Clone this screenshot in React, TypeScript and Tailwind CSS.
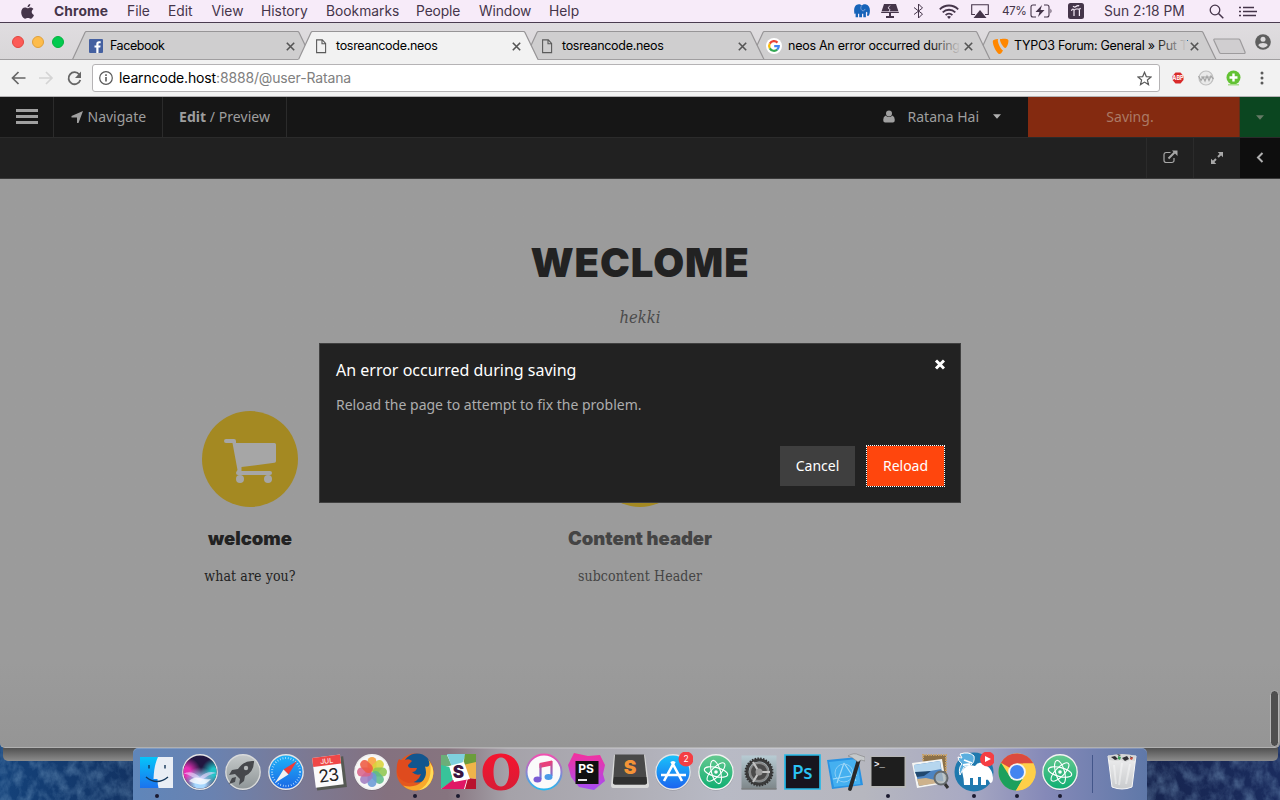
import React from "react";
import type { ReactNode } from "react";

const INK = "#45354a";

function Svg({ w, h, children, className = "", vb }: { w: number; h: number; children: ReactNode; className?: string; vb?: string }) {
  return (
    <svg width={w} height={h} viewBox={vb ?? `0 0 ${w} ${h}`} className={`block shrink-0 ${className}`} fill="none">
      {children}
    </svg>
  );
}

const Elephant = ({ size, color }: { size: number; color: string }) => (
  <Svg w={size} h={size} vb="0 0 16 16">
    <path fill={color} d="M.2 9C-.2 4.500 1.500 1.500 4.800 1.300c1.300 0 2 .5 3 1.200C8.900 1.300 10 1 11.500 1.200c3.200.6 4.500 3.300 4.400 6.300 0 3-.6 5.300-1.900 5.400-.8 0-1.200-.6-.9-1.500.3-1 .3-2.200-.3-2.700-.6.2-.9.5-.9 1.300v4.300H9.300v-3.600H8v3.600H5.200v-3.600H4v3.600H1.600V10C1.300 11.500.4 11.500.2 9z" />
    <path d="M7.300 3c-.8 1.500-.6 3.500.8 4.500 1.400.8 2.600 0 3-1.600" stroke="#f7ebf9" strokeWidth=".4" />
  </Svg>
);

function MenuBar() {
  return (
    <header className="flex h-[23px] shrink-0 items-center border-b border-[#4b3c50] bg-[#f7ebf9] text-[13.8px] leading-none text-[#45354a]">
      <div className="flex w-[54px] pl-[20px]">
        <Svg w={15} h={17}>
          <path fill={INK} d="M10.300 1c.1 1.700-1.200 3.300-2.800 3.300C7.300 2.700 8.700 1.200 10.300 1zM7.500 5.300c.7 0 1.700-.8 3-.8 1.200 0 2.200.5 2.900 1.500-2.500 1.500-2 5 .6 6-.7 1.900-2 3.700-3.300 3.700-1.100 0-1.500-.6-2.800-.6s-1.800.6-2.800.6C3.200 15.700 1.300 12.600 1.200 9.600 1.100 6.500 3 4.600 5 4.600c1.200 0 2 .7 2.500.7z" />
        </Svg>
      </div>
      <b className="w-[73px] pt-[2px] font-bold tracking-[0.1px]">Chrome</b>
      <span className="w-[41px] pt-[2px]">File</span>
      <span className="w-[43.500px] pt-[2px]">Edit</span>
      <span className="w-[49.500px] pt-[2px]">View</span>
      <span className="w-[65px] pt-[2px]">History</span>
      <span className="w-[90px] pt-[2px]">Bookmarks</span>
      <span className="w-[63px] pt-[2px] tracking-[-0.1px]">People</span>
      <span className="w-[70px] pt-[2px] tracking-[-0.1px]">Window</span>
      <span className="pt-[2px]">Help</span>
      <div className="ml-auto flex items-center">
        <div className="w-[27px]"><Elephant size={16} color="#1763b9" /></div>
        <div className="w-[33px]">
          <Svg w={18} h={14}>
            <path fill={INK} d="M3 0h12l3 9H0zM8 9h2v3H8zM5 12h8v2H5z" />
            <path d="M9 1.500 7 4l2 1.500L8 8" stroke="#f7ebf9" strokeWidth=".8" />
            <path d="M0 7.500h18" stroke="#f7ebf9" strokeWidth=".6" />
          </Svg>
        </div>
        <div className="w-[25px]">
          <Svg w={11} h={16} className="-ml-px"><path d="M1 4.500 9.500 11 5.500 15V1l4 4L1 11.500" stroke={INK} strokeWidth="1" /></Svg>
        </div>
        <div className="w-[32px]">
          <Svg w={20} h={15}>
            <g stroke={INK} strokeWidth="1.800"><path d="M.8 5.300a13 13 0 0 1 18.400 0M3.700 8.300a9 9 0 0 1 12.600 0M6.600 11.100a5 5 0 0 1 6.800 0" /></g>
            <path fill={INK} d="m10 15-2-2.200a3 3 0 0 1 4 0z" />
          </Svg>
        </div>
        <div className="w-[31px]">
          <Svg w={18} h={15}>
            <path d="M4 10.500H.7V.7h16.600v9.800H14" stroke={INK} strokeWidth="1.100" />
            <path fill={INK} d="m9 6 6.500 8h-13z" />
          </Svg>
        </div>
        <span className="w-[28px] pt-[1px] text-[11.8px] tracking-[-0.5px]">47%</span>
        <div className="w-[38px]">
          <Svg w={23} h={14}>
            <path d="M6 1H3Q1 1 1 3v8q0 2 2 2h3M14 1h3q2 0 2 2v8q0 2-2 2h-3" stroke={INK} strokeWidth="1.100" />
            <path fill={INK} d="M12 1 5.500 8h4L8 13l6.500-7h-4zM20.500 4.500q2 2.500 0 5z" />
          </Svg>
        </div>
        <div className="w-[36px]">
          <Svg w={16} h={16}>
            <rect width="16" height="16" rx="2.500" fill={INK} />
            <path d="M5 3.200q1.500 1.500 3 .3t3.200-.6M3.500 7.800Q4 5.800 5.300 6.200q1 .4.700 2v4.800M6 7.500q1-1.700 2.600-1.500h1.600q1.200 0 1.200 1.500V13M11 6.200l1.700-.8" stroke="#f7ebf9" strokeWidth="1.200" />
          </Svg>
        </div>
        <span className="w-[105px] pt-[2px]">Sun 2:18 PM</span>
        <div className="w-[30px]">
          <Svg w={15} h={15}><circle cx="6" cy="6" r="4.800" stroke={INK} strokeWidth="1.300" /><path d="m9.500 9.500 4.800 4.800" stroke={INK} strokeWidth="1.500" /></Svg>
        </div>
        <div className="w-[41px]">
          <Svg w={18} h={11}>
            <path d="M0 1.500h2M0 5.500h2M0 9.500h2M4 1.500h11M4 5.500h14M4 9.500h13" stroke={INK} strokeWidth="1.700" />
          </Svg>
        </div>
      </div>
    </header>
  );
}

const PageIcon = () => (
  <Svg w={15} h={15} className="ml-[1px]">
    <path d="M1.600.9h5.700l3.300 3.500v9.200h-9zM7 .9v3.800h3.600" stroke="#5a5a5a" strokeWidth="1.100" />
  </Svg>
);

const FacebookIcon = () => (
  <Svg w={14} h={14} className="ml-[1px]">
    <rect width="14" height="14" rx="1" fill="#4460a0" />
    <path fill="#fff" d="M7.300 14V8.600H5.500V6.500h1.800V5c0-1.800 1-2.800 2.700-2.800l1.700.1v1.900h-1.200c-.9 0-1 .5-1 1.100v1.200h2.100l-.3 2.100H9.500V14z" />
  </Svg>
);

const GoogleIcon = () => (
  <Svg w={16} h={16}>
    <circle cx="8" cy="8" r="8" fill="#fff" />
    <g strokeWidth="2.200">
      <path d="M3.800 5.600A4.900 4.900 0 0 1 11.500 4.600" stroke="#ea4335" />
      <path d="M3.800 5.600a4.900 4.900 0 0 0 0 4.800" stroke="#fbbc05" />
      <path d="M3.800 10.400a4.900 4.900 0 0 0 7.400 1.200" stroke="#34a853" />
      <path d="M11.200 11.600A4.500 4.500 0 0 0 12.800 8.100H8.200" stroke="#4285f4" />
    </g>
  </Svg>
);

const Typo3Icon = () => (
  <Svg w={17} h={17}>
    <path fill="#ff8700" d="M.8 3C1 2 3 1 6 1c-1 3 2.500 10 5 11.500-1 1.800-2.200 3.500-3.500 3.500C5 16 .5 7.500.8 3zM8 1.200c1.500-.4 7-.9 8.300.8.700 2-1.300 8-3 8-1.700 0-5.800-6.500-5.300-8.800z" />
  </Svg>
);

type TabInfo = { title: string; icon: ReactNode; active?: boolean; fade?: boolean; z: string; track: string };

const tabs: TabInfo[] = [
  { title: "Facebook", icon: <FacebookIcon />, z: "z-[5]", track: "tracking-[-0.45px]" },
  { title: "tosreancode.neos", icon: <PageIcon />, active: true, z: "z-[6]", track: "tracking-[-0.3px]" },
  { title: "tosreancode.neos", icon: <PageIcon />, z: "z-[4]", track: "tracking-[-0.3px]" },
  { title: "neos An error occurred during", icon: <GoogleIcon />, fade: true, z: "z-[3]", track: "tracking-[-0.26px]" },
  { title: "TYPO3 Forum: General » Put T", icon: <Typo3Icon />, fade: true, z: "z-[2]", track: "tracking-[-0.28px]" },
];

function Tab({ tab }: { tab: TabInfo }) {
  const fill = tab.active ? "#f2f2f2" : "#cfcecf";
  return (
    <div className={`relative -mr-[14px] flex h-[29px] w-[240px] shrink-0 items-center pl-[16px] pr-[16px] pt-[1px] ${tab.z}`}>
      <svg width="241" height="29" className="absolute left-0 top-0" fill="none">
        <path d="M0 29 14 .5H226L240 29z" fill={fill} />
        <path d="M.5 28.500 13 1.500q.5-1 1.500-1h211q1 0 1.500 1L240 28.500" stroke="#979597" strokeWidth="1.200" />
        {!tab.active && <path d="M0 28.500h240" stroke="#a09ea0" />}
      </svg>
      <div className="relative flex w-full items-center text-[12.500px] leading-none text-black">
        <div className="flex w-[22px] justify-start">{tab.icon}</div>
        <div className={`w-[172px] whitespace-nowrap pb-[2px] pt-[3px] ${tab.track}`}>
          {tab.title}
        </div>
        {tab.fade && (
          <div className="absolute left-[162px] top-0 h-full w-[33px] bg-linear-to-r from-[#cfcecf00] to-[#cfcecf]" />
        )}
        <Svg w={9} h={9} className="ml-[4px]"><path d="m.8.8 7.400 7.400M8.200.8.8 8.200" stroke="#555" strokeWidth="1.600" /></Svg>
      </div>
    </div>
  );
}

function TabStrip() {
  return (
    <div className="relative flex h-[37px] shrink-0 items-end bg-linear-to-b from-[#e0dde0] to-[#d8d6d8]">
      <div className="absolute inset-x-0 bottom-0 h-px bg-[#a09ea0]" />
      <div className="flex h-full w-[72px] items-center gap-[8px] pb-0 pl-[12px]">
        <i className="size-[12px] rounded-full border border-[#e2463f] bg-[#fc5b57]" />
        <i className="size-[12px] rounded-full border border-[#e0a03a] bg-[#fdbc4b]" />
        <i className="size-[12px] rounded-full border border-[#05b33f] bg-[#02ca4f]" />
      </div>
      {tabs.map((t, i) => <Tab key={i} tab={t} />)}
      <div className="flex flex-1 self-stretch pl-[11px] pt-[15px]">
        <Svg w={34} h={17}>
          <path d="M1.500 1h24q1 0 1.500 1l5 12q.5 1.500-1 1.500H8q-1 0-1.500-1L1 2.500Q.5 1 1.500 1z" fill="#d0ced0" stroke="#9d9b9d" strokeWidth="1.200" />
        </Svg>
      </div>
      <div className="flex w-[25px] self-stretch pt-[11px]">
        <Svg w={16} h={16}>
          <circle cx="8" cy="8" r="7.800" fill="#5f5f5f" /><circle cx="8" cy="5.200" r="2.500" fill="#dcdadc" />
          <path d="M3.300 11.200C4 8.300 12 8.300 12.700 11.200 10.500 14.500 5.500 14.500 3.300 11.200z" fill="#dcdadc" />
        </Svg>
      </div>
    </div>
  );
}

function Toolbar() {
  return (
    <div className="flex h-[37px] shrink-0 items-center border-b border-[#b5b3b5] bg-[#f2f2f2] pl-[11px]">
      <Svg w={15} h={14}><path d="M14.500 7H1.500M7.500 1l-6 6 6 6" stroke="#666" strokeWidth="1.700" /></Svg>
      <Svg w={15} h={14} className="ml-[13px]"><path d="M0 7h13M7 1l6 6-6 6" stroke="#d4d4d4" strokeWidth="1.700" /></Svg>
      <Svg w={15} h={15} className="ml-[13px]">
        <path d="M12.300 3.500a6 6 0 1 0 1 5.500" stroke="#666" strokeWidth="1.800" /><path d="M14 .5V7H8z" fill="#666" />
      </Svg>
      <div className="ml-[10px] flex h-[28px] w-[1068px] items-center rounded-[3px] border border-[#b5b3b5] bg-white pl-[6px] pr-[7px]">
        <Svg w={14} h={14}>
          <circle cx="7" cy="7" r="6.300" stroke="#5a5a5a" strokeWidth="1.200" /><path d="M7 6v4.500M7 3.300v1.600" stroke="#5a5a5a" strokeWidth="1.600" />
        </Svg>
        <div className="ml-[6px] flex-1 text-[14px] leading-none tracking-[-0.15px] text-[#808080]"><span className="text-black">learncode.host</span>:8888/@user-Ratana</div>
        <Svg w={15} h={15}><path d="m7.500 1.300 1.800 4.300 4.700.4-3.600 3 1.100 4.600-4-2.500-4 2.500L4.600 9 1 6l4.700-.4z" stroke="#5a5a5a" strokeWidth="1.200" /></Svg>
      </div>
      <Svg w={12} h={12} className="ml-[12px]">
        <path d="M3.500.5h5l3 3.500v4l-3 3.500h-5L.5 8V4z" fill="#d92a2a" />
        <text x="6" y="8" textAnchor="middle" fontSize="5.500" fontWeight="700" fill="#fff" fontFamily="Inter">ABP</text>
      </Svg>
      <Svg w={16} h={16} className="ml-[14px]">
        <circle cx="8" cy="8" r="7" stroke="#c0c0c0" strokeWidth="1.200" fill="#e9e9e9" />
        <path d="M.5 6 3 10.500 5 7l2 4 2-5 2 4.500L13 6l2.500 3M3 7h10" stroke="#a5a5a5" strokeWidth="1.200" />
      </Svg>
      <Svg w={15} h={16} className="ml-[12px]">
        <circle cx="7.500" cy="7.500" r="7" fill="#62c233" /><path d="M2 14h11v1.500H2z" fill="#a7dc8b" /><path d="M7.500 3.500v8M3.500 7.500h8" stroke="#fff" strokeWidth="2.400" />
      </Svg>
      <Svg w={4} h={14} className="ml-[19px]"><g fill="#5a5a5a"><circle cx="2" cy="2" r="1.500" /><circle cx="2" cy="7" r="1.500" /><circle cx="2" cy="12" r="1.500" /></g></Svg>
    </div>
  );
}

const Caret = ({ color }: { color: string }) => <Svg w={8} h={5}><path d="M0 .3h8L4 4.700z" fill={color} /></Svg>;

function NeosBars() {
  return (
    <div className="shrink-0 text-[14px] text-[#9e9e9e]">
      <div className="flex h-[41px] border-b border-[#2b2b2b] bg-[#161616]">
        <div className="flex w-[54px] flex-col justify-center gap-[3px] border-r border-[#2b2b2b] pb-[1px] pl-[16px]">
          <i className="h-[3px] w-[22px] bg-[#a0a0a0]" /><i className="h-[3px] w-[22px] bg-[#a0a0a0]" /><i className="h-[3px] w-[22px] bg-[#a0a0a0]" />
        </div>
        <div className="flex w-[109px] items-center border-r border-[#2b2b2b] pb-[2px] pl-[17px]">
          <Svg w={12} h={12} className="mt-[2px]"><path d="M12 0 7.500 12H6V6.500H.5V5z" fill="#a0a0a0" /></Svg>
          <span className="ml-[4.500px]">Navigate</span>
        </div>
        <div className="flex w-[124px] items-center border-r border-[#2b2b2b] pb-[2px] pl-[16px]">
          <span className="whitespace-pre tracking-[0.05px]"><b>Edit</b> / Preview</span>
        </div>
        <div className="flex flex-1 items-center justify-end pb-[2px] pr-[27px]">
          <Svg w={12} h={13}><circle cx="6" cy="3.500" r="3" fill="#a0a0a0" /><path d="M2.500 5.500q3.500 3 7 0 2.300 1 2.300 4.500 0 2.500-2 2.500H2.200q-2 0-2-2.500 0-3.500 2.300-4.500z" fill="#a0a0a0" /></Svg>
          <span className="ml-[13px] mr-[14px]">Ratana Hai</span>
          <Caret color="#b0b0b0" />
        </div>
        <div className="flex w-[212px] items-center justify-center border-r border-[#5c3019] bg-[#842a10] pb-[2px] pr-[7px] text-[#ab7a66]">Saving.</div>
        <div className="flex w-[40px] items-center justify-center bg-[#0b4620]"><Caret color="#657a65" /></div>
      </div>
      <div className="flex h-[41px] justify-end border-b border-[#3a3a3a] bg-[#212121]">
        <div className="flex w-[47px] items-center justify-center border-l border-[#2b2b2b] pb-[2px]">
          <Svg w={15} h={14}>
            <path d="M7.500 2.500H3.200Q1 2.500 1 4.700v5.600q0 2.200 2.200 2.200h5.600Q11 12.500 11 10.300V8" stroke="#a8a8a8" strokeWidth="1.200" />
            <path d="m5.500 8.500 6-6" stroke="#a8a8a8" strokeWidth="2" /><path d="M9 .5h5.500V6z" fill="#a8a8a8" />
          </Svg>
        </div>
        <div className="flex w-[47px] items-center justify-center border-l border-[#2b2b2b] pb-px">
          <Svg w={12} h={12}><path d="M6.700 0H12v5.300zM0 6.700 5.300 12H0z" fill="#a8a8a8" /><path d="M10 2 7 5M2 10l3-3" stroke="#a8a8a8" strokeWidth="2" /></Svg>
        </div>
        <div className="flex w-[40px] items-center justify-center bg-[#0e0e0e] pb-[2px]">
          <Svg w={8} h={11}><path d="M6.500 1 2 5.500 6.500 10" stroke="#b0b0b0" strokeWidth="2" /></Svg>
        </div>
      </div>
    </div>
  );
}

const Cart = () => (
  <Svg w={52} h={45} className="mt-[4px]">
    <g fill="#a6a6a6">
      <path d="M2 0h8q2 0 2 2v2h38.500q1.500 0 1.500 1.500V22q0 1.600-1.500 1.800L17.500 28v4H46q2 0 2 2t-2 2H14q-2 0-2-2 0-1.200 1.500-3L8.500 4H2Q0 4 0 2t2-2z" />
      <circle cx="16" cy="40" r="4" /><circle cx="44" cy="40" r="4" />
    </g>
  </Svg>
);

function Feature({ title, text, dim }: { title: string; text: string; dim?: boolean }) {
  return (
    <div className={`flex w-[390px] flex-col items-center ${dim ? "text-[#444]" : "text-[#222]"}`}>
      <div className="flex size-[96px] items-center justify-center rounded-full bg-[#a48922]"><Cart /></div>
      <h3 className="mt-[18px] font-['Inter',sans-serif] text-[18.5px] font-black leading-[26px] tracking-[-0.05px]">{title}</h3>
      <p className="mt-[14px] font-['DejaVu_Serif_Condensed','DejaVu_Serif',serif] text-[14px] leading-[22px] tracking-[0.1px] [font-stretch:condensed]">{text}</p>
    </div>
  );
}

function Page() {
  return (
    <main className="relative flex-1 overflow-hidden rounded-b-[5px] border-b border-[#b0b0b0] bg-linear-to-b from-[#9b9b9b] from-85% to-[#959595]">
      <h1 className="pt-[60px] text-center font-['Inter',sans-serif] text-[40px] font-black leading-[48px] tracking-[0.9px] text-[#222]">WECLOME</h1>
      <p className="mt-[19px] text-center font-['DejaVu_Serif_Condensed','DejaVu_Serif',serif] text-[16.5px] italic leading-[24px] text-[#4b4b4b] [font-stretch:condensed]">hekki</p>
      <div className="mt-[81px] flex pl-[55px]">
        <Feature title="welcome" text="what are you?" />
        <Feature title="Content header" text="subcontent Header" dim />
      </div>
      <div className="absolute bottom-0 right-[1px] h-[57px] w-[9px] rounded-full border border-[#b5b5b5] bg-[#4f4f4f]" />
    </main>
  );
}

function Dialog() {
  return (
    <section className="absolute left-[319px] top-[343px] flex h-[160px] w-[642px] flex-col border border-[#404040] bg-[#222] px-[16px] text-[14px] text-white">
      <div className="flex justify-between">
        <h2 className="pt-[14px] text-[16px] leading-[24px]">An error occurred during saving</h2>
        <Svg w={11} h={11} className="-mr-[1px] mt-[15px]"><path d="m2 1.500 8 8M10 1.500l-8 8" stroke="#fff" strokeWidth="3" /></Svg>
      </div>
      <p className="mt-[13px] leading-[20px] text-[#adadad]">Reload the page to attempt to fix the problem.</p>
      <div className="mb-[16px] mt-auto flex justify-end gap-[12px]">
        <button className="h-[40px] w-[75px] bg-[#3f3f3f] pb-[2px]">Cancel</button>
        <button className="h-[40px] w-[77px] bg-[#ff460d] pb-[2px] outline-1 outline-dotted outline-white">Reload</button>
      </div>
    </section>
  );
}

const Round = ({ fill, rim = "#e4e4e6" }: { fill: string; rim?: string }) => (
  <><circle cx="20" cy="20.500" r="18" fill="#0003" /><circle cx="20" cy="20" r="17.200" fill={fill} stroke={rim} strokeWidth="1.400" /></>
);

const photoPetals = ["#f9a13a", "#d9d33b", "#8fc651", "#5fb98a", "#6b9bd6", "#a07cc0", "#d9638a", "#ee5a42"];

const Atom = (
  <>
    <Round fill="url(#gAtom)" rim="#f2f2f2" />
    <g stroke="#fff" strokeWidth="1.100"><ellipse cx="20" cy="20" rx="12" ry="4.500" transform="rotate(14 20 20)" /><ellipse cx="20" cy="20" rx="12" ry="4.500" transform="rotate(74 20 20)" /><ellipse cx="20" cy="20" rx="12" ry="4.500" transform="rotate(134 20 20)" /></g>
    <circle cx="20" cy="20" r="1.800" fill="#fff" />
  </>
);

const dock: { dot?: boolean; art: ReactNode }[] = [
  { dot: true, art: <>
    <path d="M3 5h33v31H3z" fill="url(#gFinder)" /><path d="M21 5h15v31H21.500q-1-4-1-9H16.500Q17 13 21 5z" fill="#e9eef5" />
    <path d="M12 13v3.500M28 13v3.500" stroke="#133658" strokeWidth="1.400" /><path d="M9 25q11 9 22 0" stroke="#133658" strokeWidth="1.400" />
  </> },
  { art: <>
    <Round fill="#21163f" />
    <circle cx="20" cy="20" r="16.500" fill="url(#rPink)" /><circle cx="20" cy="20" r="16.500" fill="url(#rTeal)" /><circle cx="20" cy="20" r="16.500" fill="url(#rIce)" />
    <path d="M3.800 21.500q8-3.500 16.200 3.500 8-7 16.200-4-8 1-16.200 9Q11 23 3.800 21.500z" fill="#f0d9ff" opacity=".6" />
    <path d="M9 29q5-5 11-3t11 1q-5 6-11 5.500T9 29z" fill="#fff" opacity=".75" />
  </> },
  { art: <>
    <Round fill="url(#gSteel)" rim="#d8dadb" />
    <path d="M31 9q-10-1-16 8l-6 1-3 5 6-1 5 5-1 6 5-4 1-5Q31 20 31 9zM13 25l-4 1-3 6 6-2z" fill="#46484c" /><circle cx="23" cy="16" r="2.200" fill="#b4b8b9" />
  </> },
  { art: <>
    <Round fill="url(#gSafari)" /><circle cx="20" cy="20" r="14" stroke="#c7e9ff" strokeWidth="2" strokeDasharray=".7 2" />
    <path d="M31 9 22.500 22.500 17.500 17.500z" fill="#f03b37" /><path d="M9 31 22.500 22.500 17.500 17.500z" fill="#f1f1f1" />
  </> },
  { art: <>
    <g transform="rotate(-7 20 20)"><path d="M6 6h30v31H6z" fill="#555953" /><path d="M5 4h28v30H5z" fill="#fbfbfb" /><path d="M5 4h28v9H5z" fill="#ef4747" />
      <text x="19" y="11.300" textAnchor="middle" fontSize="7" fill="#fff" fontFamily="Inter">JUL</text>
      <text x="19" y="29.500" textAnchor="middle" fontSize="17.500" letterSpacing="-.8" fill="#222" fontFamily="Inter">23</text></g>
  </> },
  { art: <>
    <Round fill="#f8f8f6" rim="#efefef" />
    {photoPetals.map((c, i) => <rect key={c} x="15.500" y="5" width="9" height="14.500" rx="4.500" fill={c} opacity=".88" transform={`rotate(${i * 45} 20 20)`} />)}
  </> },
  { dot: true, art: <>
    <circle cx="20" cy="20" r="18.500" fill="#e4571e" /><circle cx="22" cy="16" r="14.500" fill="#12568f" />
    <path d="M4 7q2 2 6 1 4-2 7 1l-4 4q0 3 3 3h6q-1 4-5 4 4 4 9 2-3 9-13 9Q3 28 2 20 1 12 4 7z" fill="#df4b1e" />
    <path d="M33 7q5 6 5.500 13-1 17-17.500 18.500-8 0-13-5 12 3 19-4 6-6 3-15 3 1 4-1 1-3-1-6.500z" fill="#f8a92c" />
    <path d="M35 11q5 7 2.500 15-4 11-14 12.500 9-5 11-13 2-7 .5-14.500z" fill="#ffdc58" />
  </> },
  { dot: true, art: <>
    <path d="M3 3h34v34H3z" fill="#fff" /><path d="M3 3h6l5 11H3z" fill="#6cae79" /><path d="M9 2h19l-4 10-10 3z" fill="#7fd0dd" /><path d="M27 2h11v9l-13 3z" fill="#6b9d3b" /><path d="m25 13 13-3v17l-8-1z" fill="#efb44a" />
    <path d="m3 13 9 2 3 14-12 8z" fill="#38c39a" /><path d="m3 37 12-9 14-1-3 10z" fill="#e01765" /><path d="m30 26 8 1v10H27z" fill="#b8132e" />
    <path d="m11 14 15-4 6 17-16 3z" fill="#fff" /><text x="20.500" y="26" textAnchor="middle" fontSize="17" fontWeight="900" fill="#3a1540" fontFamily="Inter">S</text>
  </> },
  { art: <><path fillRule="evenodd" d="M20 1.500C31 1.500 38.500 9 38.500 20S31 38.500 20 38.500 1.500 31 1.500 20 9 1.500 20 1.500zM20 5.500c-5 0-7.500 6-7.500 14.500S15 34.500 20 34.500 28 28.500 28 20 25 5.500 20 5.500z" fill="url(#gOpera)" /></> },
  { art: <>
    <circle cx="20" cy="20" r="17.500" fill="#fafafa" stroke="url(#gTunes)" strokeWidth="2" />
    <path d="M15.500 11 28 8.500v5L15.500 16z" fill="#e8417b" /><path d="M16.500 12v15M27.500 9v15" stroke="url(#gNote)" strokeWidth="2.200" />
    <ellipse cx="13.500" cy="27.500" rx="4" ry="3" fill="#7a5bd4" /><ellipse cx="24.500" cy="25" rx="4" ry="3" fill="#4a9be8" />
  </> },
  { art: <>
    <path d="m7 1 14 3 12-1 5 10-2 9 2 7-11 9-15-3L4 25 1 13z" fill="url(#gStorm)" /><path d="M8.500 9h23v23h-23z" fill="#111" />
    <text x="19" y="20.500" textAnchor="middle" fontSize="12" fontWeight="700" fill="#fff" fontFamily="Inter">PS</text><path d="M11 28h9" stroke="#fff" strokeWidth="1.800" />
  </> },
  { art: <>
    <path d="M4 3h31l4 30q0 3-2 3H3q-2 0-2-3z" fill="#d9d9d9" /><path d="M5 2.500h29l3 28q0 2-2 2H5q-2 0-2-2z" fill="#494949" /><path d="m4 25-1 5.500q0 2 2 2h30q2 0 2-2l-.5-5.500z" fill="#303030" />
    <text x="20" y="21.500" textAnchor="middle" fontSize="19" fontWeight="900" fill="#f49337" fontFamily="Inter">S</text>
  </> },
  { art: <>
    <Round fill="url(#gStore)" /><path d="M21.500 9.500 11 29M18.500 9.500 29 29M8 23h25" stroke="#fff" strokeWidth="2.600" />
    <circle cx="33" cy="7" r="7.500" fill="#f53e43" /><text x="33" y="10" textAnchor="middle" fontSize="8.500" fill="#fff" fontFamily="Inter">2</text>
  </> },
  { art: Atom },
  { art: <>
    <path d="M2.500 3.500h35v34h-35z" fill="url(#gPref)" /><path d="M2.500 36h35v1.500h-35z" fill="#7c7f80" />
    <circle cx="20" cy="20" r="12" stroke="#3b3b3b" strokeWidth="3" /><circle cx="20" cy="20" r="13.500" stroke="#333" strokeWidth="2" strokeDasharray="1.500 1.300" />
    <circle cx="20" cy="20" r="10" fill="#888" /><circle cx="20" cy="20" r="8" fill="#4a4a4a" />
    <path d="M20 20h11M20 20l-6-10M20 20l-6 10" stroke="#c2c2c2" strokeWidth="2.200" /><circle cx="20" cy="20" r="3.500" fill="#999" />
  </> },
  { art: <>
    <path d="M3 3h35v34H3z" fill="#17151f" stroke="#26b9e8" strokeWidth="1.700" />
    <text x="20" y="26.500" textAnchor="middle" fontSize="19" fontWeight="600" letterSpacing="-.5" fill="#2bc3f4" fontFamily="Open Sans">Ps</text>
  </> },
  { art: <>
    <path d="m2 8 31-3 5 28-31 4z" fill="#2992e2" /><path d="m4 10 28-3 3.500 25L9 35z" fill="#45b0f0" /><path d="M19 11 12 31M19 11l12 18M8 27l24-4" stroke="#a5dcf9" strokeWidth="1.200" /><circle cx="19" cy="21" r="9" stroke="#8acdf5" />
    <path d="M34 7 25 37" stroke="#292929" strokeWidth="3.800" strokeLinecap="round" /><path d="M23 4q6-4 11-1l6 2v4l-4-1-3 2-4-3q-2-2-6-3z" fill="#c5c8ca" stroke="#777" strokeWidth=".5" />
  </> },
  { dot: true, art: <>
    <path d="M2 4h36v32H2z" fill="#b7b7b7" /><path d="M3.500 5h33v29h-33z" fill="#1e1e1e" /><text x="6" y="14.500" fontSize="9" fontWeight="700" fill="#eee" fontFamily="Liberation Mono">&gt;_</text>
  </> },
  { art: <>
    <path d="M12 3h23v26H12z" fill="#8c7048" stroke="#c9a36a" strokeWidth="2" strokeDasharray="1.500 1" /><path d="m1 11 30-4 4 24-29 5z" fill="#f5f5f3" /><path d="m3 13 26-4 3.500 20L8 34z" fill="#4d84c2" /><path d="m3 13 26-4 1 8-26 5z" fill="#b6d6ee" /><path d="m6 27 9-1 14 3 4 1L8 34z" fill="#cdb28c" /><path d="m4 20 16-1-7 5-7 1z" fill="#21486f" />
    <circle cx="30" cy="26" r="6.500" fill="#aeb9bfcc" stroke="#656a6d" strokeWidth="2" /><path d="m34 32 3 4" stroke="#333" strokeWidth="3" />
  </> },
  { dot: true, art: <>
    <circle cx="20" cy="20" r="19.500" fill="#1f79ae" />
    <path d="M8 19q5-8 13-5 4-6 11-1 7 5 7 13 0 5-3 5-2-5-4-3v5h-5v-8h-3v8h-5v-7h-3v7h-6q0-6-2-14z" fill="#fff" />
    <path d="M6 2q9-3 14 2 1 6-3 9l-7 2-4 8q-2-7 2-11-4-3-4-7 3 1 4 1z" fill="#5baedf" stroke="#fff" strokeWidth="1" /><path d="m10 8 8 3M9 13l7-1" stroke="#fff" strokeWidth="1.800" />
    <circle cx="33.500" cy="7" r="7.500" fill="#f53e43" /><path d="m31 4 6 3-6 3z" fill="#fff" />
  </> },
  { dot: true, art: <>
    <circle cx="20" cy="20" r="18.500" fill="#ffd14d" /><path d="M20 20 4 10.700A18.500 18.500 0 0 1 36.500 11.500H20z" fill="#dc4a3e" />
    <path d="M4 10.700A18.500 18.500 0 0 0 19 38.500l8.500-14.200L12.600 24z" fill="#1ca05d" /><path d="M36.500 11.500A18.500 18.500 0 0 1 19 38.500L28 23l-2-11.500z" fill="#ffcf48" />
    <circle cx="20" cy="20" r="8.800" fill="#f4f4f4" /><circle cx="20" cy="20" r="7" fill="#4284f0" />
  </> },
  { dot: true, art: Atom },
];

function Gradients() {
  const defs: [string, string, string][] = [
    ["gFinder", "#05c5fa", "#1b72ee"], ["gSteel", "#c5c9ca", "#8e9597"], ["gSafari", "#1fb4f8", "#1a66e4"],
    ["gOpera", "#f5152f", "#d81c35"], ["gTunes", "#f24fb0", "#27b8f0"], ["gNote", "#e8417b", "#5a82e8"], ["gStorm", "#f5309c", "#a54df5"],
    ["gStore", "#1ac4fa", "#1b62ef"], ["gAtom", "#66c990", "#0fae72"], ["gPref", "#b8ccd4", "#7d8588"], ["gTrash", "#eeeeef", "#c9cbcd"],
  ];
  const glows: [string, number, number, number, string][] = [
    ["rPink", 0.08, 0.5, 0.45, "#e62fb4"], ["rTeal", 0.95, 0.5, 0.42, "#1fc0c4"], ["rIce", 0.5, 0.85, 0.5, "#a8d8ff"],
  ];
  return (
    <svg width="0" height="0" className="absolute">
      <defs>
        {defs.map(([id, a, b]) => <linearGradient key={id} id={id} x1="0" y1="0" x2="0" y2="1"><stop offset="0" stopColor={a} /><stop offset="1" stopColor={b} /></linearGradient>)}
        {glows.map(([id, cx, cy, r, c]) => <radialGradient key={id} id={id} cx={cx} cy={cy} r={r}><stop offset=".3" stopColor={c} /><stop offset="1" stopColor={c} stopOpacity="0" /></radialGradient>)}
      </defs>
    </svg>
  );
}

function Dock() {
  return (
    <nav className="absolute left-[133px] top-[748px] flex h-[52px] w-[1014px] rounded-t-[5px] bg-[linear-gradient(90deg,#5f86ba_0%,#6a82b0_8%,#7c7993_17%,#84717f_25%,#86747f_31%,#a5a2a9_37%,#aeadb5_48%,#b8bac5_58%,#b6b7bf_72%,#a9aac3_82%,#8589b8_90%,#5f78a8_100%)] pl-[2px] shadow-[inset_0_1px_0_#ffffff30]">
      {dock.map((item, i) => (
        <div key={i} className="flex w-[43px] shrink-0 flex-col items-center pt-[4px]">
          <Svg w={40} h={40}>{item.art}</Svg>
          {item.dot && <i className="mt-[2px] size-[4px] rounded-full bg-[#1b1a30]" />}
        </div>
      ))}
      <i className="ml-[11px] mt-[7px] h-[38px] w-px bg-[#43568a]" />
      <div className="ml-[9px] pt-[4px]">
        <Svg w={40} h={40}>
          <path d="M6 4h28l-4 31q-10 4-20 0z" fill="url(#gTrash)" stroke="#f7f7f7" strokeWidth="1" />
          <path d="m12 13 2 19M20 11l-3 22M28 12l-4 20" stroke="#fff" strokeWidth="2" opacity=".4" />
          <path d="M6 4q14-4 28 0l-1 5-5-1-4 2-5-2-4 1-8-1z" fill="#d5d6d6" /><path d="m9 5 4-1 3 3-3 1zM20 6l5-2 2 3-4 2zM28 4l3 2-2 1zM15 2l4 1-2 1z" fill="#303036" /><path d="m16 4 3 1-1 3-2-1z" fill="#39a05a" /><path d="m28 6 3-1-1 3-2-1z" fill="#d04b3a" />
        </Svg>
      </div>
    </nav>
  );
}

function Desktop() {
  return (
    <svg width="1280" height="60" className="absolute left-0 top-[740px]">
      <defs>
        <filter id="rock" x="0" y="0" width="100%" height="100%">
          <feTurbulence type="fractalNoise" baseFrequency=".09 .07" numOctaves="4" seed="8" />
          <feColorMatrix values="0 0 0 0 .3  0 0 0 0 .5  0 0 0 0 .72  1.500 1 0 0 -1" />
        </filter>
        <linearGradient id="sea"><stop offset="0" stopColor="#14427a" /><stop offset=".12" stopColor="#12305f" /><stop offset=".9" stopColor="#17254f" /><stop offset="1" stopColor="#1a2c5e" /></linearGradient>
      </defs>
      <rect width="1280" height="60" fill="url(#sea)" />
      <rect width="1280" height="60" filter="url(#rock)" opacity=".4" />
    </svg>
  );
}

export default function App() {
  return (
    <div className="relative h-[800px] w-[1280px] overflow-hidden bg-[#152f5c] font-['Inter',sans-serif]">
      <Gradients />
      <Desktop />
      <div className="absolute left-[3px] top-[700px] h-[61px] w-[1275px] rounded-b-[5px] bg-linear-to-b from-[#505050] from-78% to-[#8c8c8c]" />
      <div className="relative flex h-[748px] flex-col">
        <MenuBar />
        <TabStrip />
        <Toolbar />
        <div className="flex flex-1 flex-col font-['Noto_Sans',sans-serif]">
          <NeosBars />
          <Page />
        </div>
      </div>
      <div className="font-['Noto_Sans',sans-serif]"><Dialog /></div>
      <Dock />
    </div>
  );
}
